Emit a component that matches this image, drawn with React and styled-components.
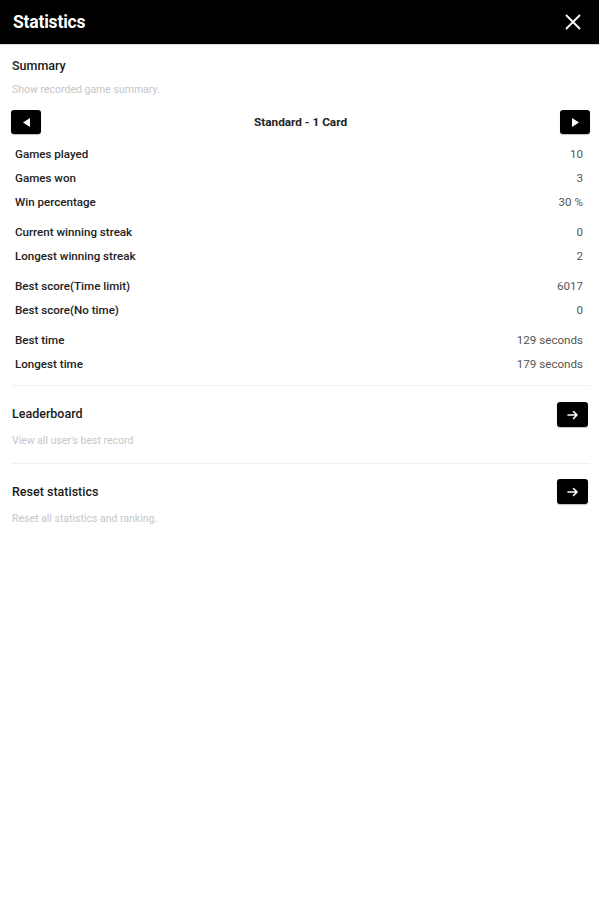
import React from "react";
import styled, { createGlobalStyle } from "styled-components";

const Global = createGlobalStyle`
  html, body { margin: 0; padding: 0; background: #fff; }
  body { font-family: Roboto, "Noto Sans", "Liberation Sans", sans-serif; -webkit-font-smoothing: antialiased; }
`;

const Page = styled.div`
  width: 599px;
  min-height: 900px;
  background: #fff;
`;

const Header = styled.header`
  height: 45px;
  background: #000;
  display: flex;
  align-items: center;
  justify-content: space-between;
  padding: 0 18px 0 13px;
  box-sizing: border-box;
  border-bottom: 1px solid #d8d8d8;
`;

const Title = styled.h1`
  margin: 0;
  color: #fff;
  font-size: 17.5px;
  font-weight: 700;
  letter-spacing: -0.2px;
`;

const CloseButton = styled.button`
  border: 0;
  background: transparent;
  padding: 0;
  width: 16px;
  height: 16px;
  display: flex;
  color: #fff;
`;

const Content = styled.main`
  padding: 0 9px 0 12px;
`;

const Section = styled.section`
  display: flex;
  align-items: flex-start;
  justify-content: space-between;
  padding: ${(p) => p.$pad};
  border-top: ${(p) => (p.$divider ? "1px solid #f0f0f0" : "none")};
`;

const TextCol = styled.div`
  display: flex;
  flex-direction: column;
  padding-top: ${(p) => p.$top || 0}px;
`;

const SectionTitle = styled.div`
  font-size: 12.5px;
  line-height: 16px;
  font-weight: 500;
  color: #1a1a1a;
`;

const SectionSub = styled.div`
  margin-top: ${(p) => p.$gap}px;
  font-size: 10.5px;
  line-height: 16px;
  color: #c6c6c6;
`;

const NavRow = styled.div`
  display: flex;
  align-items: center;
  justify-content: space-between;
  margin-left: -1px;
  margin-top: 12px;
`;

const SquareButton = styled.button`
  width: ${(p) => p.$w}px;
  height: ${(p) => p.$h}px;
  border: 0;
  border-radius: 3px;
  background: #000;
  display: flex;
  align-items: center;
  justify-content: center;
  padding: 0;
  box-shadow: 0 1px 1px rgba(0,0,0,0.25);
`;

const NavLabel = styled.div`
  font-size: 11.8px;
  font-weight: 700;
  color: #222;
`;

const Stats = styled.div`
  padding: 8px 7px 9px 3px;
  display: flex;
  flex-direction: column;
  gap: 6px;
`;

const Group = styled.div`
  display: flex;
  flex-direction: column;
`;

const StatRow = styled.div`
  height: 24px;
  display: flex;
  align-items: center;
  justify-content: space-between;
  font-size: 11.6px;
`;

const Label = styled.span`
  font-weight: 500;
  color: #222;
`;

const Value = styled.span`
  color: #555;
`;

const Triangle = ({ dir }) => (
  <svg width="11" height="11" viewBox="0 0 11 11">
    {dir === "left" ? (
      <polygon points="9,1 9,10 2,5.5" fill="#fff" />
    ) : (
      <polygon points="2,1 2,10 9,5.5" fill="#fff" />
    )}
  </svg>
);

const Arrow = () => (
  <svg width="12" height="10" viewBox="0 0 12 10">
    <path d="M1 5 H10 M6.5 1.5 L10 5 L6.5 8.5" stroke="#fff" strokeWidth="1.6" fill="none" strokeLinecap="round" strokeLinejoin="round" />
  </svg>
);

const groups = [
  [["Games played", "10"], ["Games won", "3"], ["Win percentage", "30 %"]],
  [["Current winning streak", "0"], ["Longest winning streak", "2"]],
  [["Best score(Time limit)", "6017"], ["Best score(No time)", "0"]],
  [["Best time", "129 seconds"], ["Longest time", "179 seconds"]],
];

export default function App() {
  return (
    <Page>
      <Global />
      <Header>
        <Title>Statistics</Title>
        <CloseButton aria-label="close">
          <svg width="16" height="16" viewBox="0 0 16 16">
            <path d="M1.5 1.5 L14.5 14.5 M14.5 1.5 L1.5 14.5" stroke="#fff" strokeWidth="1.8" strokeLinecap="round" />
          </svg>
        </CloseButton>
      </Header>
      <Content>
        <Section $pad="13px 0 0">
          <TextCol>
            <SectionTitle>Summary</SectionTitle>
            <SectionSub $gap={8}>Show recorded game summary.</SectionSub>
          </TextCol>
        </Section>
        <NavRow>
          <SquareButton $w={30} $h={24}><Triangle dir="left" /></SquareButton>
          <NavLabel>Standard - 1 Card</NavLabel>
          <SquareButton $w={30} $h={24}><Triangle dir="right" /></SquareButton>
        </NavRow>
        <Stats>
          {groups.map((g, i) => (
            <Group key={i}>
              {g.map(([l, v]) => (
                <StatRow key={l}>
                  <Label>{l}</Label>
                  <Value>{v}</Value>
                </StatRow>
              ))}
            </Group>
          ))}
        </Stats>
        <Section $divider $pad="16px 2px 14px 0">
          <TextCol $top={4}>
            <SectionTitle>Leaderboard</SectionTitle>
            <SectionSub $gap={11}>View all user's best record</SectionSub>
          </TextCol>
          <SquareButton $w={31} $h={25}><Arrow /></SquareButton>
        </Section>
        <Section $divider $pad="15px 2px 14px 0">
          <TextCol $top={5}>
            <SectionTitle>Reset statistics</SectionTitle>
            <SectionSub $gap={11}>Reset all statistics and ranking.</SectionSub>
          </TextCol>
          <SquareButton $w={31} $h={25}><Arrow /></SquareButton>
        </Section>
      </Content>
    </Page>
  );
}
